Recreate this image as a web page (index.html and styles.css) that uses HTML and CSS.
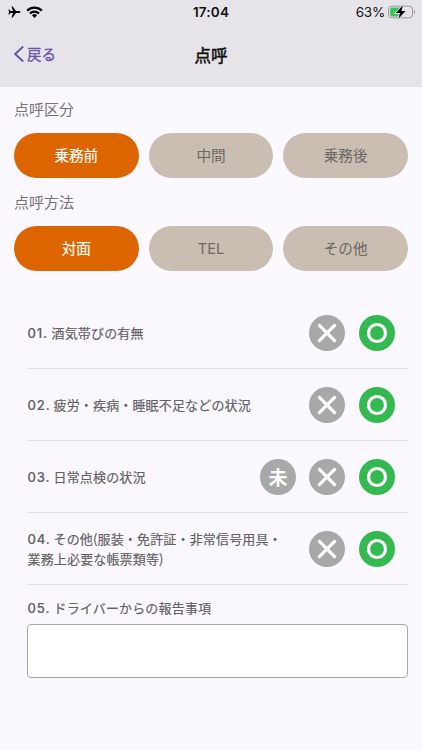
FILE: index.html
```html
<!DOCTYPE html>
<html lang="ja">
<head>
<meta charset="utf-8">
<title>点呼</title>
<link rel="stylesheet" href="styles.css">
</head>
<body>
<svg class="defs" aria-hidden="true">
  <symbol id="cross" viewBox="0 0 36 36"><circle cx="18" cy="18" r="18" fill="#a8a8a8"/><path d="M10.4 10.4 25.6 25.6M25.6 10.4 10.4 25.6" stroke="#fff" stroke-width="3.3" stroke-linecap="round"/></symbol>
  <symbol id="ring" viewBox="0 0 36 36"><circle cx="18" cy="18" r="18" fill="#34b951"/><circle cx="18" cy="18" r="8.5" fill="none" stroke="#fff" stroke-width="3.2"/></symbol>
</svg>
<header class="header">
  <div class="status">
    <div class="status-left">
      <svg width="13" height="12" viewBox="0 0 13 12"><path d="M12.5 6c0-.7-1-1-2-1H8L4.700.5H3.500L5 5H2.500L1.300 3.500H.4L1 6 .4 8.500h.9L2.500 7H5L3.500 11.500h1.200L8 7h2.500c1 0 2-.3 2-1z"/></svg>
      <svg width="17" height="12" viewBox="0 0 17 12"><g fill="none" stroke="#000" stroke-width="2.200"><path d="M1.100 4.600a10.500 10.500 0 0 1 14.800 0"/><path d="M3.900 7.500a6.500 6.500 0 0 1 9.200 0"/></g><path d="M5.900 9.300a3.700 3.700 0 0 1 5.200 0L8.500 11.900z"/></svg>
    </div>
    <div class="clock">17:04</div>
    <div class="status-right">
      <span>63%</span>
      <svg width="28" height="16" viewBox="0 0 28 16"><rect x=".6" y="2.100" width="24" height="11.800" rx="3.500" fill="none" stroke="#99979c" stroke-width="1"/><path d="M4 3.600h10v8.800H4A1.800 1.800 0 0 1 2.200 10.600V5.400A1.800 1.800 0 0 1 4 3.600z" fill="#35c759"/><path d="M26 6v4c1.600-.7 1.600-3.300 0-4z" fill="#99979c"/><path d="M14.900 1.300 7.900 9h4l-1.500 5.800L17.600 7h-4.200z" stroke="#e6e4e9" stroke-width="1.800" paint-order="stroke"/></svg>
    </div>
  </div>
  <div class="nav">
    <a class="back"><svg width="10" height="16" viewBox="0 0 10 16"><path d="M9.200.5 1.200 8l8 7.500" fill="none" stroke="#6950ab" stroke-width="1.900"/></svg><span>戻る</span></a>
    <h1>点呼</h1>
  </div>
</header>
<main>
  <section class="group">
    <h2>点呼区分</h2>
    <div class="choices"><button class="choice on">乗務前</button><button class="choice">中間</button><button class="choice">乗務後</button></div>
  </section>
  <section class="group">
    <h2>点呼方法</h2>
    <div class="choices"><button class="choice on">対面</button><button class="choice latin">TEL</button><button class="choice">その他</button></div>
  </section>
  <div class="checks">
    <div class="row"><p><span class="num one">01. </span>酒気帯びの有無</p><div class="marks"><svg><use href="#cross"/></svg><svg><use href="#ring"/></svg></div></div>
    <div class="row"><p><span class="num">02. </span>疲労・疾病・睡眠不足などの状況</p><div class="marks"><svg><use href="#cross"/></svg><svg><use href="#ring"/></svg></div></div>
    <div class="row"><p><span class="num">03. </span>日常点検の状況</p><div class="marks"><span class="pending">未</span><svg><use href="#cross"/></svg><svg><use href="#ring"/></svg></div></div>
    <div class="row"><p><span class="num">04. </span>その他(服装・免許証・非常信号用具・<br>業務上必要な帳票類等)</p><div class="marks"><svg><use href="#cross"/></svg><svg><use href="#ring"/></svg></div></div>
    <div class="report"><p><span class="num">05. </span>ドライバーからの報告事項</p><textarea></textarea></div>
  </div>
</main>
</body>
</html>
```

FILE: styles.css
```css
* { box-sizing: border-box; margin: 0; padding: 0; }
body { width: 422px; height: 750px; overflow: hidden; background: #fcf8ff; color: #636163; font-family: "Noto Sans CJK JP", sans-serif; }
svg { display: block; flex: none; }
.defs { position: absolute; width: 0; height: 0; }
.header { height: 87px; background: #e6e4e9; border-bottom: 1px solid #e1dfe4; color: #111; }
.status { display: grid; grid-template-columns: 1fr auto 1fr; align-items: center; height: 24px; padding: 0 6px 0 8px; font-family: Inter, sans-serif; }
.status-left { display: flex; gap: 5px; align-items: center; }
.clock { font-size: 13.5px; font-weight: 600; letter-spacing: .2px; padding-right: 2px; }
.status-right { display: flex; justify-content: flex-end; align-items: center; gap: 3px; font-size: 13.5px; letter-spacing: -.2px; }
.nav { display: grid; grid-template-columns: 1fr auto 1fr; align-items: center; height: 60px; padding: 0 14px; }
.back { display: flex; align-items: center; gap: 3px; color: #6950ab; font-size: 14.5px; line-height: 20px; -webkit-text-stroke: .3px; }
h1 { font-size: 16.5px; font-weight: 400; -webkit-text-stroke: .5px; line-height: 24px; padding-top: 2px; }
main { padding: 10.5px 14px 0; }
.group { height: 93px; }
h2 { font-size: 15px; font-weight: 400; line-height: 22px; margin-bottom: 13px; color: #777479; }
.choices { display: grid; grid-template-columns: repeat(3, 1fr); gap: 10px; }
.choice { height: 45px; padding-bottom: 1px; border: 0; border-radius: 23px; background: #cabeb2; color: #6b6764; font: 400 14.6px "Noto Sans CJK JP", sans-serif; }
.choice.on { background: #dd6500; color: #fff; -webkit-text-stroke: .15px; }
.choice.latin { font-family: Inter, sans-serif; font-size: 14.6px; padding: 2px 0 0; }
.checks { margin: 13.5px 0 0 13px; }
.row { display: flex; align-items: center; justify-content: space-between; height: 72px; padding-right: 13.5px; border-bottom: 1px solid #e1dde4; }
p { font-size: 13px; font-weight: 400; -webkit-text-stroke: .18px; line-height: 20px; letter-spacing: .16px; white-space: nowrap; padding-left: .5px; }
.num { display: inline-block; width: 26px; white-space: pre; font-family: Inter, sans-serif; font-weight: 500; letter-spacing: .9px; }
.num.one { width: 24px; }
.marks { display: flex; gap: 13.3px; }
.marks svg { width: 36px; height: 36px; }
.pending { width: 36px; height: 36px; border-radius: 50%; background: #a8a8a8; color: #fff; font-size: 19px; font-weight: 700; line-height: 35px; text-align: center; }
.report { padding-top: 12.5px; }
.report p { margin-bottom: 6px; }
textarea { display: block; width: 381px; height: 54px; border: 1px solid #aaa8ac; border-radius: 4px; background: #fff; resize: none; }
```
